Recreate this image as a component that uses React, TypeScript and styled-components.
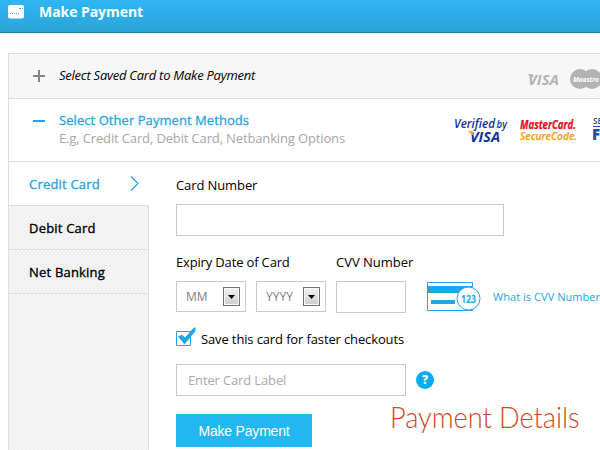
import React from "react";
import styled, { createGlobalStyle, css } from "styled-components";

const blue = "#22a5e8";
const line = "#dedede";

const GlobalStyle = createGlobalStyle`
  * { box-sizing: border-box; }
  body { margin: 0; background: #fff; overflow: hidden; }
  input, button { font: inherit; border-radius: 0; }
`;

const Page = styled.div`
  width: 600px;
  height: 450px;
  overflow: hidden;
  background: #fff;
  color: #000;
  font: 13px/18px "Open Sans", sans-serif;
  white-space: nowrap;
`;

const Header = styled.header`
  height: 33px;
  display: flex;
  align-items: flex-start;
  padding: 3px 0 0 8px;
  gap: 15px;
  color: #fff;
  background: linear-gradient(#2fb6f3, #2aa3d8);
  border-bottom: 1px solid #1c80ad;
  svg { margin-top: 2px; }
`;

const Title = styled.h1`
  margin: 0;
  font-size: 14px;
  line-height: 18px;
  font-weight: 700;
  letter-spacing: -0.06px;
`;

const Panel = styled.main`
  width: 640px;
  height: 420px;
  margin: 20px 0 0 8px;
  border: 1px solid ${line};
`;

const MethodRow = styled.section<{ $open?: boolean }>`
  display: flex;
  align-items: flex-start;
  height: ${(p) => (p.$open ? 63 : 45)}px;
  padding: ${(p) => (p.$open ? 12 : 13)}px 0 0 24px;
  border-bottom: 1px solid ${line};
  background: ${(p) => (p.$open ? "#fff" : "#f7f7f7")};
`;

const ToggleIcon = styled.svg`
  flex: none;
  width: 12px;
  height: 12px;
  margin: 3px 14px 0 0;
`;

const MethodText = styled.div`
  width: 394px;
  flex: none;
`;

const SavedTitle = styled.div`
  margin-top: -1px;
  font-style: italic;
  letter-spacing: -0.25px;
`;

const OtherTitle = styled.div`
  color: ${blue};
  -webkit-text-stroke: 0.3px ${blue};
  letter-spacing: 0.06px;
`;

const Hint = styled.div`
  color: #a6a6a6;
  letter-spacing: -0.14px;
`;

const Logos = styled.svg<{ $saved?: boolean }>`
  flex: none;
  width: 160px;
  height: 30px;
  margin: ${(p) => (p.$saved ? "-3px" : "4px")} 0 0 -9px;
`;

const Body = styled.div`
  display: flex;
  height: 330px;
`;

const Sidebar = styled.nav`
  width: 140px;
  display: flex;
  flex-direction: column;
  border-right: 1px solid ${line};
  background: #f2f2f2 repeating-conic-gradient(#efefef 0 25%, #f6f6f6 0 50%) 0 0 / 4px 4px;
`;

const Tab = styled.div<{ $active?: boolean }>`
  display: flex;
  align-items: center;
  justify-content: space-between;
  height: 44px;
  padding: 0 10px 0 20px;
  letter-spacing: 0.2px;
  -webkit-text-stroke: 0.35px currentColor;
  border-bottom: 1px solid ${line};
  ${(p) =>
    p.$active &&
    css`
      width: 140px;
      color: ${blue};
      background: #fff;
    `}
`;

const Form = styled.form`
  padding: 14px 0 0 27px;
  width: 500px;
`;

const Label = styled.label<{ $spacing?: number }>`
  display: block;
  height: 18px;
  letter-spacing: ${(p) => p.$spacing ?? -0.1}px;
`;

const Input = styled.input<{ $w: number }>`
  display: block;
  width: ${(p) => p.$w}px;
  height: 32px;
  padding: 0 11px;
  border: 1px solid #c9c9c9;
  background: #fff;
  outline: 0;
  letter-spacing: -0.14px;
  &::placeholder { color: #aaa; opacity: 1; }
`;

const DateRow = styled.div`
  display: flex;
  gap: 10px;
  margin-top: 17px;
`;

const Field = styled.div<{ $w?: number }>`
  width: ${(p) => (p.$w ? p.$w + "px" : "auto")};
`;

const FieldControls = styled.div`
  display: flex;
  gap: 10px;
  margin-top: 10px;
`;

const Select = styled.div`
  display: flex;
  align-items: center;
  justify-content: space-between;
  width: 70px;
  height: 31px;
  padding: 0 5px 0 9px;
  border: 1px solid #c9c9c9;
  color: #7d7d7d;
  font-size: 12px;
`;

const Arrow = styled.span`
  display: grid;
  place-items: center;
  width: 17px;
  height: 19px;
  border: 1px solid #707070;
  box-shadow: inset 0 0 0 1px #fafafa;
  background: linear-gradient(#f2f2f2, #cecece);
`;

const CvvHelp = styled.div`
  display: flex;
  align-items: flex-start;
  gap: 12px;
  margin: 28px 0 0 11px;
  color: ${blue};
  font-size: 11px;
`;

const CvvLink = styled.a`
  margin-top: 7px;
  letter-spacing: 0.05px;
`;

const SaveRow = styled.div`
  display: flex;
  align-items: flex-start;
  gap: 5px;
  margin-top: 13px;
  height: 22px;
`;

const SaveText = styled.span`
  margin-top: 4px;
  letter-spacing: -0.13px;
`;

const LabelRow = styled.div`
  display: flex;
  align-items: center;
  gap: 10px;
  margin-top: 16px;
`;

const Help = styled.span`
  display: grid;
  place-items: center;
  width: 18px;
  height: 18px;
  border-radius: 50%;
  background: #00aeef;
  color: #fff;
  font-size: 12px;
  font-weight: 800;
`;

const Footer = styled.div`
  display: flex;
  align-items: flex-start;
  margin-top: 18px;
`;

const PayButton = styled.button`
  width: 136px;
  height: 33px;
  padding: 0;
  border: 0;
  background: #22b7f2;
  color: #fff;
  font-size: 14px;
  font-family: "Liberation Sans", sans-serif;
  letter-spacing: -0.2px;
`;

const Caption = styled.h2`
  margin: -15px 0 0 78px;
  font: 300 29px/36px Lato, sans-serif;
  letter-spacing: -0.05px;
  transform: scaleX(0.938);
  transform-origin: left;
  color: #d4471e;
`;

const Picker = ({ text }: { text: string }) => (
  <Select>
    {text}
    <Arrow>
      <svg width="7" height="4"><path d="M0 0h7L3.5 4z" fill="#000" /></svg>
    </Arrow>
  </Select>
);

export default function App() {
  return (
    <Page>
      <GlobalStyle />
      <Header>
        <svg width="16" height="14">
          <rect width="16" height="13.5" rx="2" fill="#fff" />
          <path d="M11 3.5h2M14 3.5h1" stroke="#2baee8" />
          <path d="M2 8.5h10" stroke="#59bdec" strokeDasharray="1 1" />
        </svg>
        <Title>Make Payment</Title>
      </Header>
      <Panel>
        <MethodRow>
          <ToggleIcon><path d="M0 6h12M6 0v12" stroke="#858585" strokeWidth="2" /></ToggleIcon>
          <MethodText><SavedTitle>Select Saved Card to Make Payment</SavedTitle></MethodText>
          <Logos $saved fontFamily="Open Sans, sans-serif" fontStyle="italic" fontWeight="700">
            <path d="M83 10h6l1 4z" fill="#c0c0c0" />
            <text x="84" y="20.500" fontSize="15" textLength="31" lengthAdjust="spacingAndGlyphs" fill="#b3b3b3">VISA</text>
            <circle cx="136" cy="15" r="10" fill="#b3b3b3" />
            <circle cx="148" cy="15" r="10" fill="#b3b3b3" />
            <text x="129" y="17.500" fontSize="7.500" textLength="26" lengthAdjust="spacingAndGlyphs" fill="#fff">Maestro</text>
          </Logos>
        </MethodRow>
        <MethodRow $open>
          <ToggleIcon><path d="M0 7h12" stroke={blue} strokeWidth="2" /></ToggleIcon>
          <MethodText>
            <OtherTitle>Select Other Payment Methods</OtherTitle>
            <Hint>E.g, Credit Card, Debit Card, Netbanking Options</Hint>
          </MethodText>
          <Logos fontFamily="Open Sans, sans-serif" fontStyle="italic" fill="#1230a0">
            <text x="10" y="13" fontSize="12" fontWeight="600" textLength="41" lengthAdjust="spacingAndGlyphs">Verified</text>
            <text x="52.500" y="13" fontSize="10" fontWeight="600" textLength="10.500" lengthAdjust="spacingAndGlyphs">by</text>
            <text x="26" y="26.500" fontSize="14.500" fontWeight="700" textLength="30" lengthAdjust="spacingAndGlyphs">VISA</text>
            <path d="M23.500 16h5l1.500 5z" fill="#f7a823" />
            <text x="76" y="13.500" fontSize="11.500" fontWeight="700" stroke="#e90b25" strokeWidth=".25" textLength="56" lengthAdjust="spacingAndGlyphs" fill="#e90b25">MasterCard.</text>
            <text x="76" y="24.500" fontSize="11.500" fontWeight="600" stroke="#f6a01a" strokeWidth=".25" textLength="57" lengthAdjust="spacingAndGlyphs" fill="#f6a01a">SecureCode.</text>
            <g fill="#244d9b" fontStyle="normal">
              <text x="149" y="9" fontSize="8" fontWeight="600">SE</text>
              <path d="M149 11h12v1h-12z" />
              <text x="148" y="25" fontSize="15" fontWeight="800">F</text>
            </g>
          </Logos>
        </MethodRow>
        <Body>
          <Sidebar>
            <Tab $active>
              Credit Card
              <svg width="9" height="16" fill="none" stroke={blue} strokeWidth="1.2"><path d="M1 .5l7 7-7 7" /></svg>
            </Tab>
            <Tab>Debit Card</Tab>
            <Tab>Net Banking</Tab>
          </Sidebar>
          <Form>
            <Field>
              <Label>Card Number</Label>
              <FieldControls><Input $w={328} /></FieldControls>
            </Field>
            <DateRow>
              <Field $w={150}>
                <Label $spacing={-0.16}>Expiry Date of Card</Label>
                <FieldControls><Picker text="MM" /><Picker text="YYYY" /></FieldControls>
              </Field>
              <Field $w={70}>
                <Label $spacing={-0.02}>CVV Number</Label>
                <FieldControls><Input $w={70} /></FieldControls>
              </Field>
              <CvvHelp>
                <svg width="54" height="30">
                  <path d="M.5 1.5h45v28H.5z" fill="#fff" stroke={blue} />
                  <path d="M1 5h45v7H1zM4 19h24v4H4z" fill={blue} />
                  <circle cx="41.5" cy="17.5" r="11.5" fill="#fff" stroke={blue} />
                  <text x="34" y="21.5" fontSize="10" fontWeight="700" textLength="15" lengthAdjust="spacingAndGlyphs" fill={blue}>123</text>
                </svg>
                <CvvLink>What is CVV Number</CvvLink>
              </CvvHelp>
            </DateRow>
            <SaveRow>
              <svg width="20" height="20">
                <path d="M.5 5.5h14v14H.5z" fill="#fff" stroke={blue} />
                <path d="M2 10.500l4-2 3 3 7.500-8.500 3-2v4L8.500 18.500z" fill={blue} />
              </svg>
              <SaveText>Save this card for faster checkouts</SaveText>
            </SaveRow>
            <LabelRow>
              <Input $w={230} placeholder="Enter Card Label" />
              <Help>?</Help>
            </LabelRow>
            <Footer>
              <PayButton type="button">Make Payment</PayButton>
              <Caption>Payment Details</Caption>
            </Footer>
          </Form>
        </Body>
      </Panel>
    </Page>
  );
}
